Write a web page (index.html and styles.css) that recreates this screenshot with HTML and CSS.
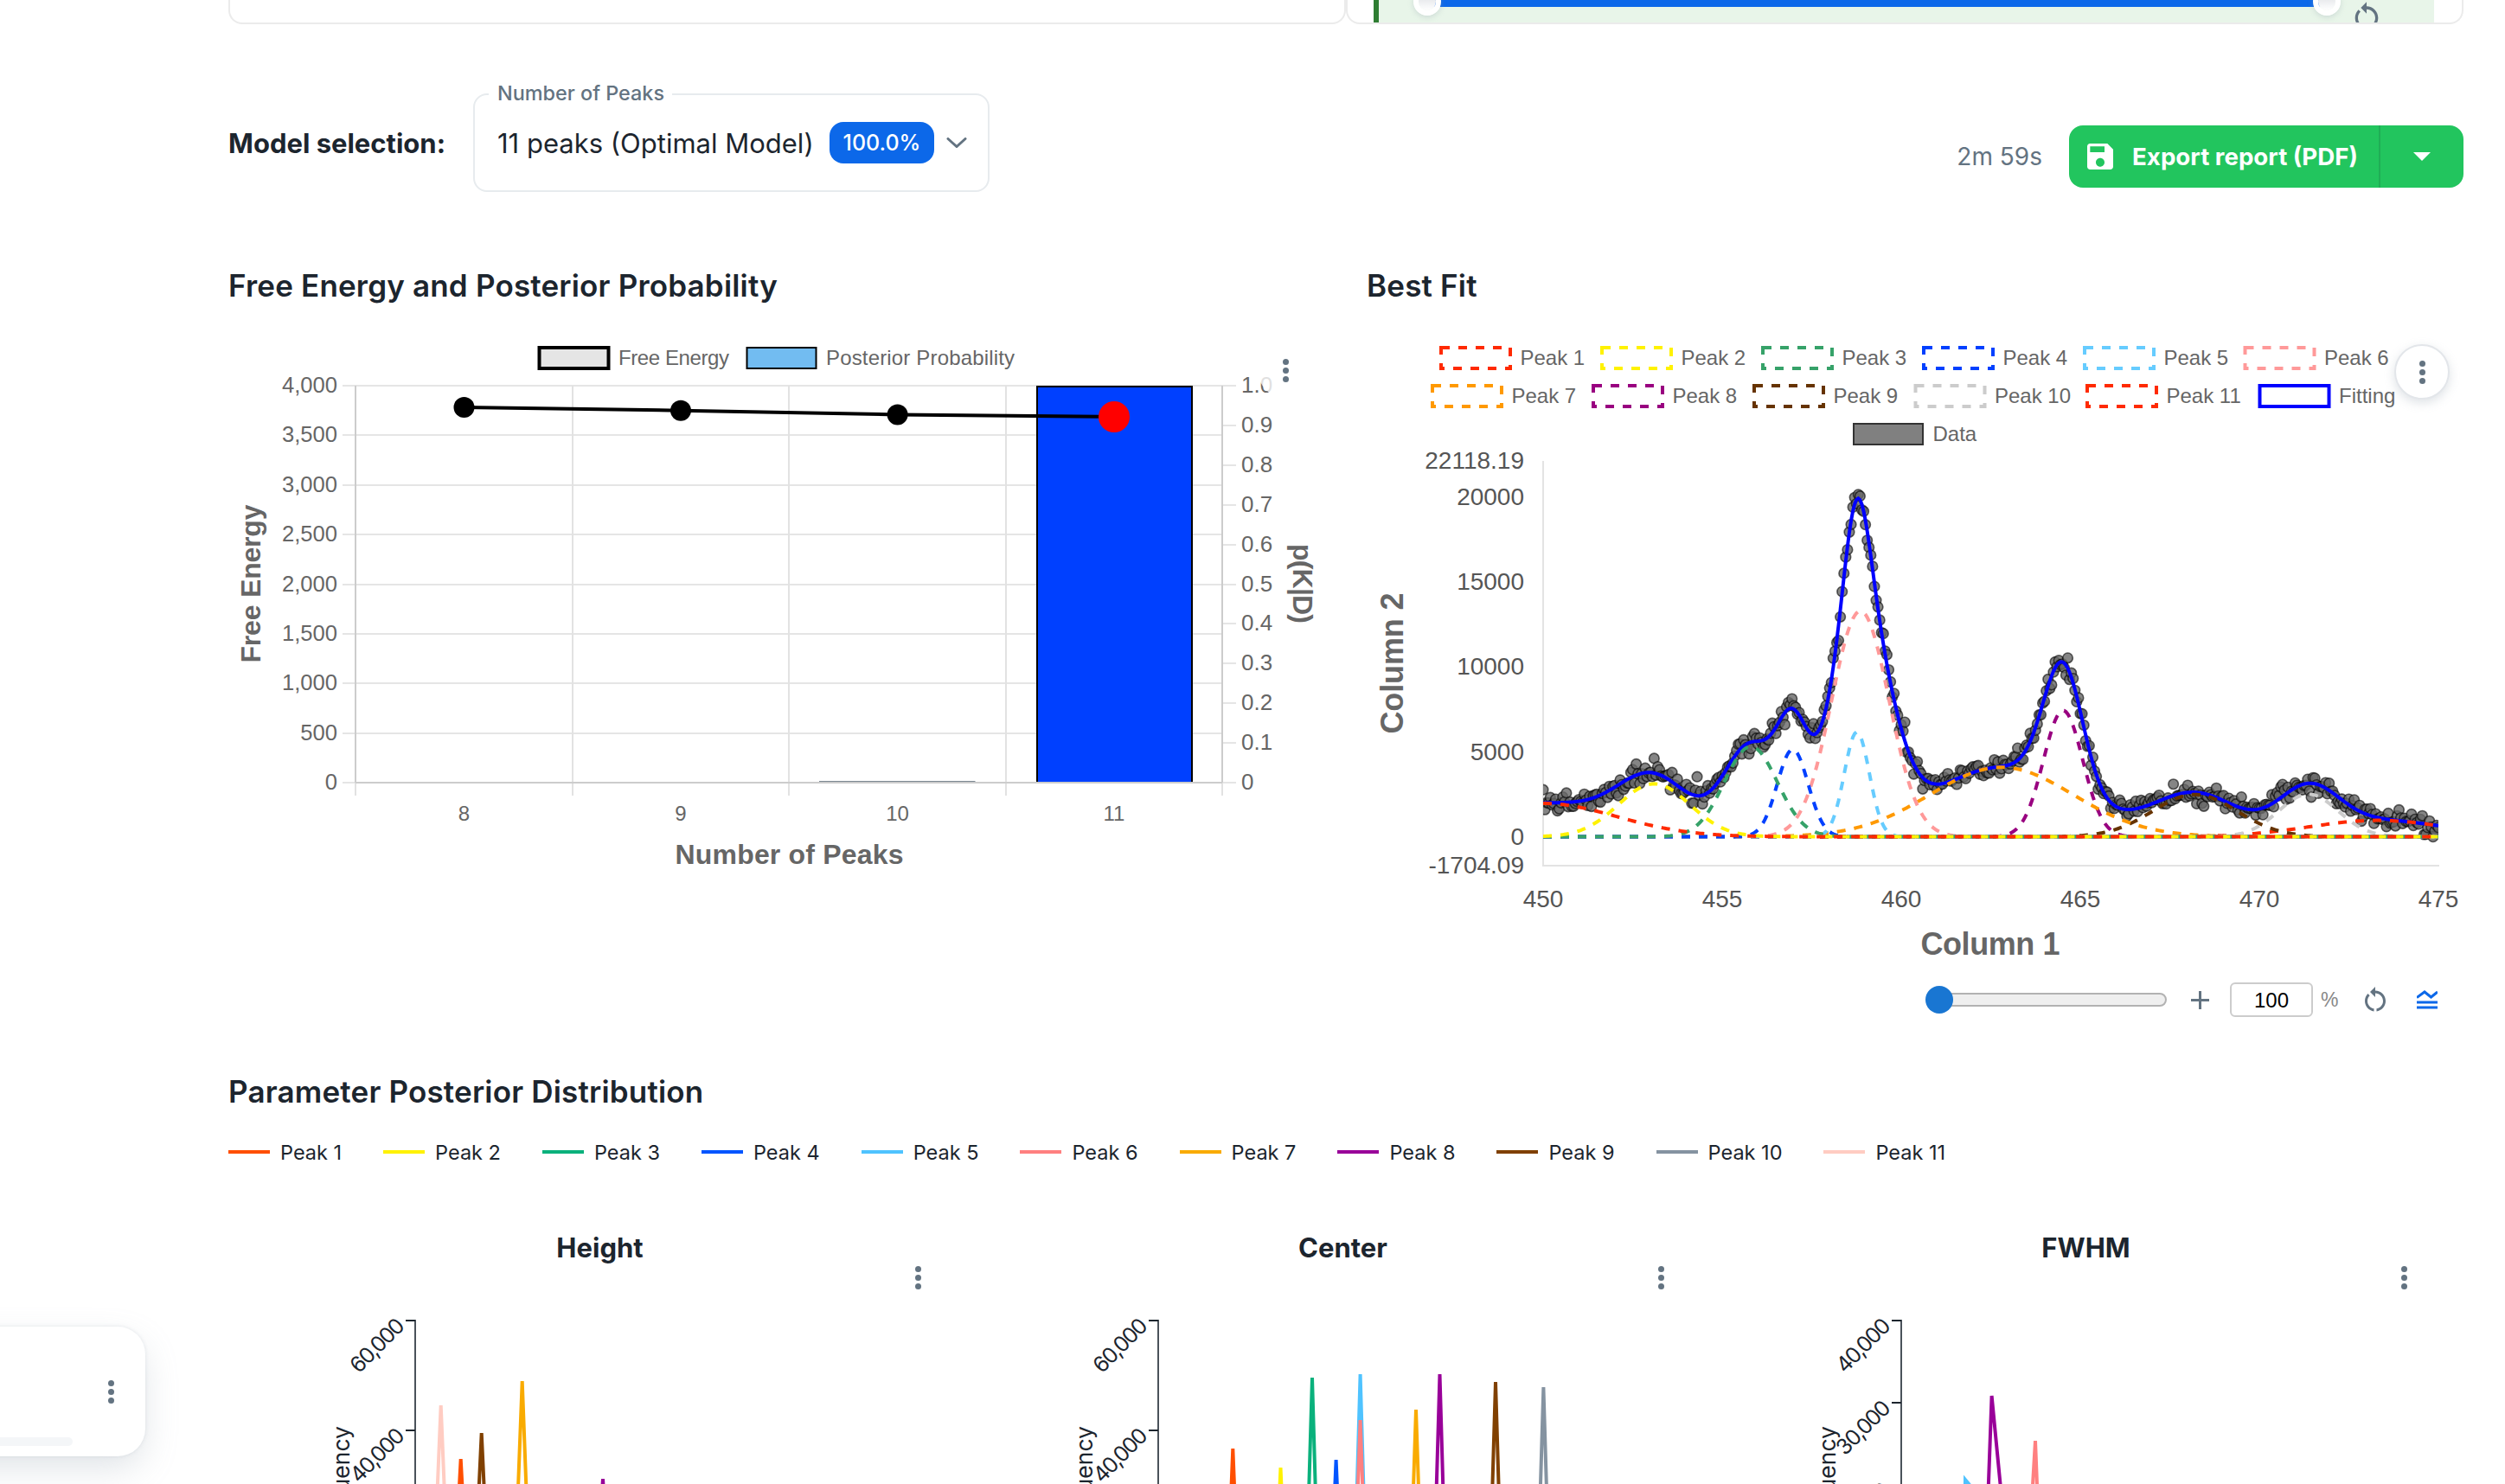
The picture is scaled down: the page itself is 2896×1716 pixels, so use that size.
FILE: index.html
```
<!DOCTYPE html>
<html lang="en">

<head>
    <meta charset="UTF-8">
    <meta name="viewport" content="width=device-width, initial-scale=1.0">
    <title>Peak Fitting Report</title>
    <link rel="stylesheet" href="styles.css">
</head>

<body>

    <main class="page">
        <div class="panels">
            <div class="panel"></div>
            <div class="panel">
                <div class="range-box">
                    <div class="range-track"></div>
                    <span class="range-thumb range-start"></span>
                    <span class="range-thumb range-end"></span>
                    <svg class="range-reset" viewBox="0 0 24 24"><path d="M12 5V2L8 6l4 4V7c3.31 0 6 2.69 6 6 0 2.97-2.17 5.43-5 5.91v2.02c3.95-.49 7-3.85 7-7.93 0-4.42-3.58-8-8-8zm-6 8c0-1.65.67-3.15 1.76-4.24L6.34 7.34C4.9 8.79 4 10.79 4 13c0 4.08 3.05 7.44 7 7.93v-2.02c-2.83-.48-5-2.94-5-5.91z"/></svg>
                </div>
            </div>
        </div>

        <div class="toolbar">
            <div class="model-label">Model selection:</div>
            <div class="select">
                <span class="select-legend">Number of Peaks</span>
                <span class="select-value">11 peaks (Optimal Model)</span>
                <span class="chip">100.0%</span>
                <svg class="chevron" viewBox="0 0 24 12"><path d="M2 1.5l10 9 10-9"/></svg>
            </div>
            <div class="export">
                <span class="elapsed">2m 59s</span>
                <div class="export-btn">
                    <button class="export-main">
                        <svg viewBox="0 0 24 24"><path d="M17 3H5c-1.11 0-2 .9-2 2v14c0 1.1.89 2 2 2h14c1.1 0 2-.9 2-2V7l-4-4zm-5 16c-1.66 0-3-1.34-3-3s1.34-3 3-3 3 1.34 3 3-1.34 3-3 3zm3-10H5V5h10v4z"/></svg>
                        <span>Export report (PDF)</span>
                    </button>
                    <button class="export-more"><svg viewBox="0 0 20 10"><path d="M0 0h20L10 10z"/></svg></button>
                </div>
            </div>
        </div>

        <div class="charts">
            <section class="chart">
                <h2>Free Energy and Posterior Probability</h2>
                <svg id="energyChart" class="energy" viewBox="264 380 1276 640"></svg>
                <button class="menu-btn energy-menu"><i></i><i></i><i></i></button>
            </section>
            <section class="chart">
                <h2>Best Fit</h2>
                <svg id="fitChart" class="fit" viewBox="1580 380 1268 740"></svg>
                <button class="menu-btn fit-menu"><i></i><i></i><i></i></button>
                <div class="zoom-bar">
                    <div class="zoom-slider"><span class="zoom-thumb"></span></div>
                    <svg class="zoom-plus" viewBox="0 0 21 21"><path d="M10.5 0v21M0 10.5h21"/></svg>
                    <span class="zoom-input">100</span>
                    <span class="zoom-unit">%</span>
                    <svg class="zoom-reset" viewBox="0 0 24 24"><path d="M12 5V2L8 6l4 4V7c3.31 0 6 2.69 6 6 0 2.97-2.17 5.43-5 5.91v2.02c3.95-.49 7-3.85 7-7.93 0-4.42-3.58-8-8-8zm-6 8c0-1.65.67-3.15 1.76-4.24L6.34 7.34C4.9 8.79 4 10.79 4 13c0 4.08 3.05 7.44 7 7.93v-2.02c-2.83-.48-5-2.94-5-5.91z"/></svg>
                    <svg class="zoom-lines" viewBox="0 0 24 22"><path d="M0 8.5l9-6.500 7.500 6L24 2M0 14h24M0 20h24"/></svg>
                </div>
            </section>
        </div>

        <section class="posterior">
            <h2>Parameter Posterior Distribution</h2>
            <ul class="peak-legend" id="peakLegend"></ul>
            <div class="histograms">
                <div class="histogram">
                    <h3>Height</h3>
                    <svg id="heightChart" viewBox="0 1496 859 220"></svg>
                    <button class="menu-btn hist-menu"><i></i><i></i><i></i></button>
                </div>
                <div class="histogram">
                    <h3>Center</h3>
                    <svg id="centerChart" viewBox="0 1496 859 220"></svg>
                    <button class="menu-btn hist-menu"><i></i><i></i><i></i></button>
                </div>
                <div class="histogram">
                    <h3>FWHM</h3>
                    <svg id="fwhmChart" viewBox="0 1496 859 220"></svg>
                    <button class="menu-btn hist-menu"><i></i><i></i><i></i></button>
                </div>
            </div>
        </section>
    </main>

    <div class="task-card">
        <div class="task-progress"></div>
        <button class="menu-btn task-menu"><i></i><i></i><i></i></button>
    </div>

    <script src="script.js"></script>

</body>

</html>
```
FILE: styles.css
```
* {
    box-sizing: border-box;
}

body {
    margin: 0;
    width: 2896px;
    height: 1716px;
    overflow: hidden;
    background-color: #fff;
    color: #1c252e;
    font-family: Inter, Roboto, sans-serif;
}

h2,
h3,
ul {
    margin: 0;
    padding: 0;
}

button {
    border: none;
    padding: 0;
    font-family: inherit;
    background: none;
}

svg {
    display: block;
}

.page {
    margin-left: 264px;
    width: 2584px;
}

/* top panels */
.panels {
    display: flex;
    height: 28px;
}

.panel {
    flex: 1;
    border: 2px solid #ebebeb;
    border-top: none;
    border-radius: 0 0 16px 16px;
    overflow: hidden;
}

.range-box {
    position: relative;
    height: 26px;
    margin: 0 32px 0 30px;
    border-left: 6px solid #2e7d32;
    background-color: #e8f5e9;
}

.range-track {
    height: 8px;
    margin: 0 124px 0 56px;
    background-color: #0c68e9;
}

.range-thumb {
    position: absolute;
    top: -14px;
    width: 32px;
    height: 32px;
    border: 6px solid #fff;
    border-radius: 50%;
    background: linear-gradient(#dcdfe3, #fff) padding-box;
    box-shadow: 0 2px 6px rgba(145, 158, 171, 0.3);
}

.range-start {
    left: 40px;
}

.range-end {
    right: 108px;
}

.range-reset {
    position: absolute;
    right: 58px;
    top: -1px;
    width: 40px;
    height: 40px;
    fill: #637381;
}

/* model selection and export */
.toolbar {
    display: flex;
    align-items: center;
    height: 114px;
    margin-top: 80px;
}

.model-label {
    width: 283px;
    font-size: 31px;
    font-weight: 700;
}

.select {
    position: relative;
    display: flex;
    align-items: center;
    width: 597px;
    height: 114px;
    padding-left: 26px;
    border: 2px solid #e7ebee;
    border-radius: 16px;
}

.select-legend {
    position: absolute;
    left: 16px;
    top: -16px;
    padding: 0 9px 0 10px;
    background-color: #fff;
    color: #637381;
    font-size: 23.4px;
    font-weight: 500;
    line-height: 28px;
}

.select-value {
    width: 384px;
    font-size: 31px;
    white-space: nowrap;
}

.chip {
    display: flex;
    align-items: center;
    justify-content: center;
    width: 121px;
    height: 48px;
    border-radius: 16px;
    background-color: #0c68e9;
    color: #fff;
    font-size: 25px;
    font-weight: 450;
}

.chevron {
    width: 24px;
    height: 12px;
    margin-left: 14px;
    fill: none;
    stroke: #637381;
    stroke-width: 3;
    stroke-linecap: round;
}

.export {
    display: flex;
    align-items: center;
    align-self: flex-end;
    margin: 0 0 5px auto;
}

.elapsed {
    margin-right: 31px;
    color: #637381;
    font-size: 28px;
}

.export-btn {
    display: flex;
    width: 456px;
    height: 72px;
    border-radius: 16px;
    overflow: hidden;
    background-color: #22c55e;
}

.export-main {
    display: flex;
    align-items: center;
    width: 360px;
    padding-left: 16px;
    border-right: 2px solid #1fae55;
    color: #fff;
    font-size: 27.7px;
    font-weight: 700;
    white-space: nowrap;
}

.export-main svg {
    width: 40px;
    height: 40px;
    margin-right: 17px;
    fill: #fff;
}

.export-more {
    display: flex;
    align-items: center;
    justify-content: center;
    flex: 1;
}

.export-more svg {
    width: 20px;
    height: 10px;
    fill: #fff;
}

/* charts */
h2 {
    font-size: 35px;
    font-weight: 600;
    letter-spacing: 0.18px;
    line-height: 44px;
    white-space: nowrap;
}

.charts {
    display: grid;
    grid-template-columns: 1316px 1268px;
    height: 1018px;
    padding-top: 86px;
}

.chart {
    position: relative;
}

.chart svg text {
    font-family: "Liberation Sans", Arial, sans-serif;
}

.energy {
    width: 1276px;
    height: 640px;
    margin-top: 28px;
}

.fit {
    width: 1268px;
    height: 740px;
    margin-top: 28px;
}

.menu-btn {
    position: absolute;
    display: flex;
    flex-direction: column;
    align-items: center;
    justify-content: center;
    gap: 3px;
    width: 64px;
    height: 64px;
    border-radius: 50%;
}

.menu-btn i {
    width: 7px;
    height: 7px;
    border-radius: 50%;
    background-color: #637381;
}

.energy-menu {
    left: 1190px;
    top: 88px;
    background-color: rgba(255, 255, 255, 0.8);
}

.fit-menu {
    left: 1188px;
    top: 90px;
    border: 2px solid #e3e6ea;
    background-color: #fff;
    box-shadow: 0 4px 12px rgba(145, 158, 171, 0.3);
}

.zoom-bar {
    display: flex;
    align-items: center;
    height: 40px;
    margin: 16px 0 0 647px;
}

.zoom-slider {
    display: flex;
    align-items: center;
    width: 278px;
    height: 16px;
    border: 2px solid #b2b2b2;
    border-radius: 8px;
    background-color: #efefef;
}

.zoom-thumb {
    width: 32px;
    height: 32px;
    margin-left: -3px;
    border-radius: 50%;
    background-color: #1976d2;
    flex: none;
}

.zoom-plus {
    width: 21px;
    height: 21px;
    margin-left: 28px;
    stroke: #637381;
    stroke-width: 3;
}

.zoom-input {
    width: 96px;
    height: 40px;
    margin-left: 24px;
    border: 2px solid #ccc;
    border-radius: 6px;
    color: #000;
    font: 24px/37px "Liberation Sans", Arial, sans-serif;
    text-align: center;
}

.zoom-unit {
    margin-left: 9px;
    width: 45px;
    color: #888;
    font: 23px "Liberation Sans", Arial, sans-serif;
}

.zoom-reset {
    width: 36px;
    height: 36px;
    fill: #637381;
}

.zoom-lines {
    width: 24px;
    height: 22px;
    margin-left: 30px;
    fill: none;
    stroke: #0c68e9;
    stroke-width: 3;
}

/* posterior distribution */
.peak-legend {
    display: flex;
    gap: 48px;
    height: 40px;
    margin-top: 28px;
    list-style: none;
}

.peak-legend li {
    display: flex;
    align-items: center;
    gap: 12px;
    font-size: 23.5px;
    white-space: nowrap;
}

.peak-legend i {
    width: 48px;
    height: 4px;
}

.histograms {
    display: grid;
    grid-template-columns: repeat(3, 859px);
    margin-top: 71px;
}

.histogram {
    position: relative;
}

.histogram h3 {
    height: 73px;
    font-size: 31px;
    font-weight: 700;
    line-height: 40px;
    text-align: center;
}

.histogram svg {
    width: 859px;
    height: 220px;
}

.histogram svg text {
    fill: #1c252e;
}

.hist-menu {
    left: 765px;
    top: 22px;
}

/* floating card in the corner */
.task-card {
    position: fixed;
    left: -400px;
    top: 1534px;
    width: 568px;
    height: 150px;
    border-radius: 32px;
    background-color: #fff;
    box-shadow: 0 0 4px rgba(145, 158, 171, 0.24), 0 16px 40px -4px rgba(145, 158, 171, 0.3);
}

.task-progress {
    width: 484px;
    height: 10px;
    margin-top: 128px;
    border-radius: 5px;
    background-color: #f4f6f8;
}

.task-menu {
    right: 8px;
    top: 43px;
}
```
FILE: script.js
```
const NS = 'http://www.w3.org/2000/svg';

function add(parent, tag, attrs, text) {
    const el = document.createElementNS(NS, tag);
    for (const key in attrs) {
        el.setAttribute(key, attrs[key]);
    }
    if (text !== undefined) {
        el.textContent = text;
    }
    parent.appendChild(el);
    return el;
}

function line(svg, x1, y1, x2, y2, color, width) {
    add(svg, 'line', { x1: x1, y1: y1, x2: x2, y2: y2, stroke: color, 'stroke-width': width || 2 });
}

function label(svg, x, y, text, size, anchor, color, extra) {
    add(svg, 'text', Object.assign({ x: x, y: y, 'font-size': size, 'text-anchor': anchor, fill: color }, extra || {}), text);
}

// Free energy chart
function drawEnergy() {
    const svg = document.getElementById('energyChart');
    const left = 411, right = 1413, top = 446, bottom = 905;
    const step = (right - left) / 4;
    const xs = [536.5, 787, 1037.6, 1288];

    add(svg, 'rect', { x: 623.5, y: 402, width: 80, height: 24, fill: '#e5e5e5', stroke: '#000', 'stroke-width': 4 });
    label(svg, 715, 422, 'Free Energy', 24, 'start', '#666', { textLength: 128 });
    add(svg, 'rect', { x: 863.5, y: 402, width: 80, height: 24, fill: '#72bcf1', stroke: '#000', 'stroke-width': 2 });
    label(svg, 955, 422, 'Posterior Probability', 24, 'start', '#666', { textLength: 218 });

    for (let i = 0; i <= 8; i++) {
        const y = Math.round(bottom - i * (bottom - top) / 8);
        line(svg, 396, y, right, y, '#e5e5e5');
        label(svg, 390, y + 8, (i * 500).toLocaleString('en-US'), 25.6, 'end', '#666');
    }
    for (let i = 0; i <= 4; i++) {
        const x = Math.round(left + i * step);
        line(svg, x, top, x, 920, '#e2e2e2');
    }
    for (let i = 0; i <= 10; i++) {
        const y = Math.round(bottom - i * (bottom - top) / 10);
        line(svg, right, y, 1429, y, '#e5e5e5');
        label(svg, 1435, y + 8, i === 0 ? '0' : (i / 10).toFixed(1), 26, 'start', '#666');
    }
    line(svg, left, top, left, bottom, '#ccc');
    line(svg, right, top, right, bottom, '#ccc');
    line(svg, left, bottom, right, bottom, '#ccc');

    line(svg, 947, 903.5, 1127.5, 903.5, '#7b8791', 1);
    add(svg, 'rect', { x: 1198, y: 446, width: 181, height: 458, fill: '#000' });
    add(svg, 'rect', { x: 1200, y: 448, width: 177, height: 456, fill: '#0040ff' });

    const ys = [471, 474.7, 479.5, 482];
    add(svg, 'polyline', { points: xs.map((x, i) => x + ',' + ys[i]).join(' '), fill: 'none', stroke: '#000', 'stroke-width': 4 });
    xs.forEach((x, i) => {
        add(svg, 'circle', { cx: x, cy: ys[i], r: i === 3 ? 18 : 12, fill: i === 3 ? '#f00' : '#000' });
        label(svg, x, 949, 8 + i, 24, 'middle', '#666');
    });

    label(svg, 912.5, 999, 'Number of Peaks', 32, 'middle', '#666', { 'font-weight': 700, textLength: 264 });
    label(svg, 0, 0, 'Free Energy', 32, 'middle', '#666', { 'font-weight': 700, textLength: 183, transform: 'translate(301 675) rotate(-90)' });
    label(svg, 0, 0, 'p(K|D)', 32, 'middle', '#666', { 'font-weight': 700, textLength: 92, transform: 'translate(1495 675) rotate(90)' });
}

// [height, center, sigma, color]
const peaks = [
    [1958, 450, 2.05, '#ff2a00'],
    [3110, 453.1, 1.0, '#fff200'],
    [5300, 455.8, 0.74, '#36a269'],
    [5135, 456.97, 0.43, '#0040ff'],
    [6150, 458.76, 0.35, '#66ccff'],
    [13270, 458.86, 0.8, '#ff9999'],
    [4080, 462.8, 2.0, '#ff9900'],
    [7420, 464.52, 0.55, '#990080'],
    [2480, 468.2, 1.18, '#663300'],
    [2500, 471.37, 0.83, '#cccccc'],
    [961, 473.3, 1.9, '#ff2a00']
];

function gauss(p, x) {
    return p[0] * Math.exp(-Math.pow(x - p[1], 2) / (2 * p[2] * p[2]));
}

// seeded noise, so the scatter is the same on every load
let seed = 4242;
function random() {
    seed = (seed * 16807) % 2147483647;
    return seed / 2147483647;
}
function noise() {
    return Math.sqrt(-2 * Math.log(random())) * Math.cos(2 * Math.PI * random());
}

function drawFit() {
    const svg = document.getElementById('fitChart');
    const px = v => 1784 + (v - 450) * 41.4;
    const py = v => 967.5 - v * 0.019664;

    const rows = [
        { y: 402, items: [[1666, 0], [1852, 1], [2038, 2], [2224, 3], [2410, 4], [2595.5, 5]] },
        { y: 446, items: [[1656, 6], [1842, 7], [2028, 8], [2214.5, 9], [2413, 10], [2612.5, 'Fitting']] },
        { y: 490, items: [[2143, 'Data']] }
    ];
    rows.forEach(row => {
        row.items.forEach(([x, item]) => {
            const box = { x: x, y: row.y, width: 80, height: 24, fill: 'none', 'stroke-width': 4 };
            let name = item;
            if (item === 'Fitting') {
                box.stroke = '#00f';
            } else if (item === 'Data') {
                box.fill = '#808080';
                box.stroke = '#333';
                box['stroke-width'] = 2;
            } else {
                box.stroke = peaks[item][3];
                box['stroke-dasharray'] = '10 10';
                name = 'Peak ' + (item + 1);
            }
            add(svg, 'rect', box);
            label(svg, x + 91.5, row.y + 20, name, 24, 'start', '#666');
        });
    });

    line(svg, 1784, 533, 1784, 1001, '#e3e3e3');
    line(svg, 1783, 1001, 2820, 1001, '#e3e3e3');
    [[532.5, '22118.19'], [574.2, '20000'], [672.5, '15000'], [770.8, '10000'], [869.2, '5000'], [967.5, '0'], [1000.5, '-1704.09']].forEach(([y, t]) => {
        label(svg, 1762, y + 9.5, t, 28, 'end', '#555');
    });
    for (let v = 450; v <= 475; v += 5) {
        label(svg, px(v), 1049, v, 28, 'middle', '#555');
    }
    label(svg, 2301, 1104, 'Column 1', 36, 'middle', '#666', { 'font-weight': 700, textLength: 161 });
    label(svg, 0, 0, 'Column 2', 36, 'middle', '#666', { 'font-weight': 700, textLength: 163, transform: 'translate(1621.5 767) rotate(-90)' });

    const clip = add(svg, 'clipPath', { id: 'area' });
    add(clip, 'rect', { x: 1784, y: 533, width: 1035, height: 468 });
    const plot = add(svg, 'g', { 'clip-path': 'url(#area)' });

    const xs = [];
    for (let i = 0; i <= 500; i++) {
        xs.push(450 + i * 0.05);
    }
    const sum = x => peaks.reduce((s, p) => s + gauss(p, x), 0);
    const path = f => 'M' + xs.map(x => px(x).toFixed(2) + ' ' + py(f(x)).toFixed(2)).join('L');

    xs.forEach(x => {
        add(plot, 'circle', {
            cx: px(x).toFixed(2), cy: py(sum(x) + noise() * 300).toFixed(2), r: 5.8,
            fill: 'rgba(102,102,102,0.8)', stroke: 'rgba(0,0,0,0.6)', 'stroke-width': 1.6
        });
    });
    add(plot, 'path', { d: path(sum), fill: 'none', stroke: '#00f', 'stroke-width': 4 });
    for (let i = peaks.length - 1; i >= 0; i--) {
        add(plot, 'path', { d: path(x => gauss(peaks[i], x)), fill: 'none', stroke: peaks[i][3], 'stroke-width': 4, 'stroke-dasharray': '10 10' });
    }
}

const colors = ['#ff4f00', '#fff200', '#0ab17c', '#0055ff', '#4fc3ff', '#ff8080', '#f9ab00', '#990099', '#804000', '#8593a1', '#ffccc2'];

function drawLegend() {
    const list = document.getElementById('peakLegend');
    colors.forEach((color, i) => {
        list.insertAdjacentHTML('beforeend', `<li><i style="background-color:${color}"></i><span>Peak ${i + 1}</span></li>`);
    });
}

// lines: [color index, points]
function drawHistogram(id, ticks, lines) {
    const svg = document.getElementById(id);
    label(svg, 0, 0, 'Frequency', 26.5, 'end', '', { transform: 'translate(139.5 1649) rotate(-90)' });
    lines.forEach(([color, points]) => {
        add(svg, 'polyline', { points: points, fill: 'none', stroke: colors[color], 'stroke-width': 4 });
    });
    line(svg, 216, 1526, 216, 1716, '#4a525a');
    ticks.forEach(([y, t]) => {
        line(svg, 205, y, 216, y, '#1c252e');
        label(svg, 0, 0, t, 25, 'end', '', { textLength: 77, transform: `translate(205.5 ${y + 7.5}) rotate(-45)` });
    });
}

function spike(color, x, y, half) {
    return [color, `${x - half},1907 ${x},${y} ${x + half},1907`];
}

drawEnergy();
drawFit();
drawLegend();
drawHistogram('heightChart', [[1527, '60,000'], [1654, '40,000']], [
    spike(10, 245.7, 1625, 11.75),
    spike(0, 268.7, 1687, 11.75),
    spike(8, 292.7, 1657, 11.75),
    spike(6, 339.7, 1597, 11.75),
    spike(7, 433, 1710, 11.75)
]);
drawHistogram('centerChart', [[1527, '60,000'], [1654, '40,000']], [
    spike(0, 302.3, 1675, 9.2),
    spike(1, 357.5, 1697, 9.2),
    spike(2, 394, 1593, 9.2),
    spike(3, 421.6, 1688, 9.2),
    spike(4, 449.6, 1589, 9.2),
    spike(5, 449.6, 1642, 9.2),
    spike(6, 514, 1630, 9.2),
    spike(7, 541.5, 1589, 9.2),
    spike(8, 606, 1598, 9.2),
    spike(9, 661.4, 1604, 9.2)
]);
drawHistogram('fwhmChart', [[1527, '40,000'], [1622, '30,000'], [1717, '20,000']], [
    [4, '289,1780 290,1711 310,1735'],
    [7, '310,1907 320.6,1614 330.5,1716 336,1773'],
    [5, '362,1820 371,1666 377,1820']
]);
```
